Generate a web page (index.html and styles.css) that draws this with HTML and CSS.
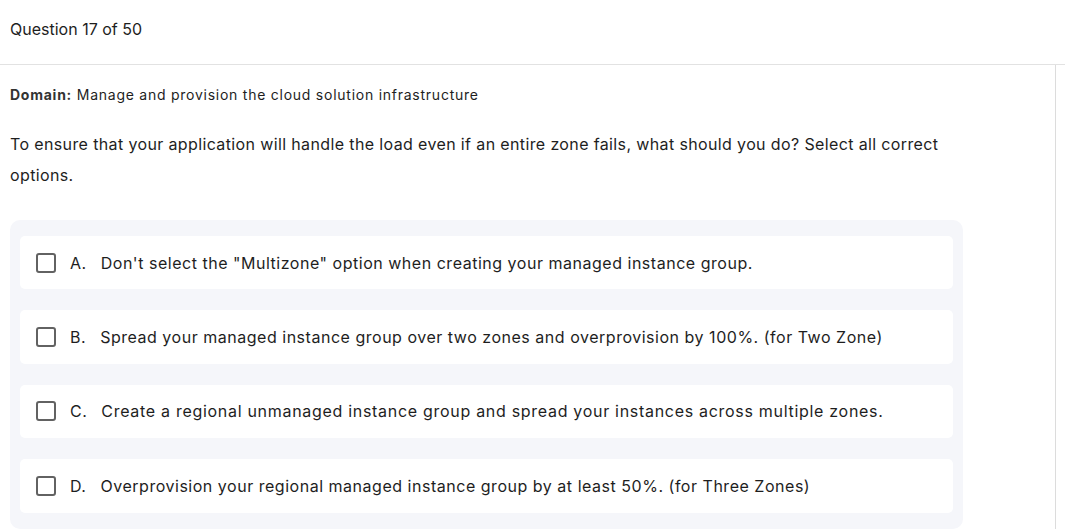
FILE: index.html
```html
<!DOCTYPE html>
<html>
<head>
<meta charset="utf-8">
<link rel="stylesheet" href="styles.css">
</head>
<body>
<header class="top">Question 17 of 50</header>
<div class="layout">
  <main class="main">
    <p class="domain"><b>Domain:</b> Manage and provision the cloud solution infrastructure</p>
    <p class="question">To ensure that your application will handle the load even if an entire zone fails, what should you do? Select all correct options.</p>
    <div class="options">
      <label class="option"><span class="box"></span><span class="letter">A.</span><span class="text">Don't select the "Multizone" option when creating your managed instance group.</span></label>
      <label class="option"><span class="box"></span><span class="letter">B.</span><span class="text">Spread your managed instance group over two zones and overprovision by 100%. (for Two Zone)</span></label>
      <label class="option"><span class="box"></span><span class="letter">C.</span><span class="text">Create a regional unmanaged instance group and spread your instances across multiple zones.</span></label>
      <label class="option"><span class="box"></span><span class="letter">D.</span><span class="text">Overprovision your regional managed instance group by at least 50%. (for Three Zones)</span></label>
    </div>
  </main>
  <aside class="side"></aside>
</div>
</body>
</html>
```
FILE: styles.css
```css
* { box-sizing: border-box; }
html, body { margin: 0; padding: 0; background: #fff; }
body {
  font-family: "Inter", "Open Sans", sans-serif;
  color: #1e1e1e;
  width: 1065px;
  height: 529px;
  overflow: hidden;
}
.top {
  height: 65px;
  border-bottom: 1px solid #e2e2e2;
  padding: 0 10px;
  display: flex;
  align-items: center;
  padding-bottom: 6px;
  font-size: 16px;
}
.layout { display: flex; }
.main {
  width: 1056px;
  border-right: 1px solid #dcdcdc;
  padding: 21px 92px 0 10px;
  height: 470px;
}
.domain { margin: 0; font-size: 14px; line-height: 18px; letter-spacing: 0.75px; }
.domain b { font-weight: 700; color: #333; }
.question { margin: 25px 0 0; font-size: 16px; line-height: 31px; letter-spacing: 0.37px; }
.options {
  margin-top: 29px;
  background: #f5f6fa;
  border-radius: 10px;
  padding: 16px 10px 16px;
  display: flex;
  flex-direction: column;
  gap: 21px;
}
.option {
  background: #fff;
  border-radius: 5px;
  height: 53.4px;
  display: flex;
  align-items: center;
  padding-left: 16px;
  font-size: 16px;
  letter-spacing: 0.52px;
}
.box {
  width: 20px; height: 20px;
  border: 2.5px solid #626262;
  border-radius: 3px;
  flex: none;
  margin-right: 14px;
}
.letter { margin-right: 14px; }
.option:nth-child(3) .text { letter-spacing: 0.7px; }
```
